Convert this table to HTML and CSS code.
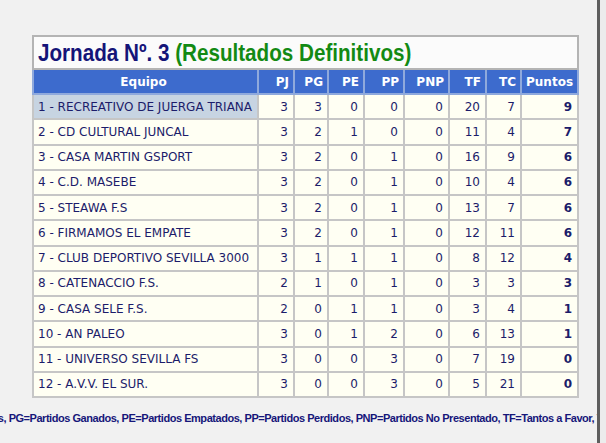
FILE: index.html
```html
<!DOCTYPE html>
<html lang="es">
<head>
<meta charset="utf-8">
<title>Jornada 3</title>
<link rel="stylesheet" href="styles.css">
</head>
<body>
<div class="page">
  <table class="clasif">
    <colgroup>
      <col class="c-eq"><col class="c-pj"><col class="c-pg"><col class="c-pe"><col class="c-pp"><col class="c-pnp"><col class="c-tf"><col class="c-tc"><col class="c-pts">
    </colgroup>
    <thead>
      <tr class="title-row"><th colspan="9" class="title"><span class="t-wrap"><span class="t-main">Jornada Nº. 3</span> <span class="t-sub">(Resultados Definitivos)</span></span></th></tr>
      <tr class="head">
        <th class="h-eq">Equipo</th><th>PJ</th><th>PG</th><th>PE</th><th>PP</th><th>PNP</th><th>TF</th><th>TC</th><th>Puntos</th>
      </tr>
    </thead>
    <tbody>
      <tr><td class="eq sel">1 - RECREATIVO DE JUERGA TRIANA</td><td>3</td><td>3</td><td>0</td><td>0</td><td>0</td><td>20</td><td>7</td><td class="pts">9</td></tr>
      <tr><td class="eq">2 - CD CULTURAL JUNCAL</td><td>3</td><td>2</td><td>1</td><td>0</td><td>0</td><td>11</td><td>4</td><td class="pts">7</td></tr>
      <tr><td class="eq">3 - CASA MARTIN GSPORT</td><td>3</td><td>2</td><td>0</td><td>1</td><td>0</td><td>16</td><td>9</td><td class="pts">6</td></tr>
      <tr><td class="eq">4 - C.D. MASEBE</td><td>3</td><td>2</td><td>0</td><td>1</td><td>0</td><td>10</td><td>4</td><td class="pts">6</td></tr>
      <tr><td class="eq">5 - STEAWA F.S</td><td>3</td><td>2</td><td>0</td><td>1</td><td>0</td><td>13</td><td>7</td><td class="pts">6</td></tr>
      <tr><td class="eq">6 - FIRMAMOS EL EMPATE</td><td>3</td><td>2</td><td>0</td><td>1</td><td>0</td><td>12</td><td>11</td><td class="pts">6</td></tr>
      <tr><td class="eq">7 - CLUB DEPORTIVO SEVILLA 3000</td><td>3</td><td>1</td><td>1</td><td>1</td><td>0</td><td>8</td><td>12</td><td class="pts">4</td></tr>
      <tr><td class="eq">8 - CATENACCIO F.S.</td><td>2</td><td>1</td><td>0</td><td>1</td><td>0</td><td>3</td><td>3</td><td class="pts">3</td></tr>
      <tr><td class="eq">9 - CASA SELE F.S.</td><td>2</td><td>0</td><td>1</td><td>1</td><td>0</td><td>3</td><td>4</td><td class="pts">1</td></tr>
      <tr><td class="eq">10 - AN PALEO</td><td>3</td><td>0</td><td>1</td><td>2</td><td>0</td><td>6</td><td>13</td><td class="pts">1</td></tr>
      <tr><td class="eq">11 - UNIVERSO SEVILLA FS</td><td>3</td><td>0</td><td>0</td><td>3</td><td>0</td><td>7</td><td>19</td><td class="pts">0</td></tr>
      <tr><td class="eq">12 - A.V.V. EL SUR.</td><td>3</td><td>0</td><td>0</td><td>3</td><td>0</td><td>5</td><td>21</td><td class="pts">0</td></tr>
    </tbody>
  </table>
  <p class="legend">PJ=Partidos Jugados, PG=Partidos Ganados, PE=Partidos Empatados, PP=Partidos Perdidos, PNP=Partidos No Presentado, TF=Tantos a Favor, TC=Tantos en Contra</p>
</div>
</body>
</html>
```

FILE: styles.css
```css
html, body {
  margin: 0;
  padding: 0;
  background: #ececec;
  overflow: hidden;
}

body {
  width: 606px;
  height: 443px;
}

.page {
  width: 600px;
  height: 443px;
  overflow: hidden;
  background: #f1f1f1;
  box-sizing: border-box;
  border-right: 3px solid #5e5e5e;
  padding: 35px 0 0 32px;
}

.clasif {
  border-collapse: collapse;
  table-layout: fixed;
  width: 546px;
  font-family: "DejaVu Sans", Verdana, sans-serif;
  font-size: 12px;
  color: #1c1c6a;
  border: 2px solid #b4b4b4;
}

.c-eq { width: 225px; }
.c-pj { width: 36px; }
.c-pg { width: 34px; }
.c-pe { width: 36px; }
.c-pp { width: 40px; }
.c-pnp { width: 45px; }
.c-tf { width: 37px; }
.c-tc { width: 35px; }
.c-pts { width: 57px; }

.title-row { height: 33px; }

.title {
  background: #fbfbfb;
  text-align: left;
  padding: 1px 0 0 4px;
  font-family: "Liberation Sans", Arial, sans-serif;
  font-size: 24px;
  font-weight: bold;
  white-space: nowrap;
  border: 2px solid #b4b4b4;
  overflow: hidden;
}

.t-wrap {
  display: inline-block;
  transform: scaleX(0.86);
  transform-origin: left center;
}

.t-main { color: #141478; }
.t-sub { color: #138a13; }

.head { height: 25px; }

.head th {
  background: #3d6bcd;
  color: #ffffff;
  font-weight: bold;
  font-size: 12px;
  text-align: right;
  padding: 0 4px 0 0;
  border: 2px solid #8fa9dc;
  border-top: 2px solid #b4b4b4;
  white-space: nowrap;
}

.head th.h-eq { text-align: center; }

tbody tr { height: 25.25px; }

tbody td {
  background: #fffff3;
  border: 2px solid #c6c6c6;
  text-align: right;
  padding: 0 5px 0 0;
  white-space: nowrap;
}

tbody td.eq {
  text-align: left;
  padding: 0 0 0 4px;
}

tbody td.sel { background: #c7d4e2; }

tbody td.pts { font-weight: bold; }

.legend {
  margin: 14px 0 0 -132px;
  white-space: nowrap;
  font-family: "Liberation Sans", Arial, sans-serif;
  font-size: 11px;
  font-weight: bold;
  letter-spacing: -0.46px;
  color: #16167a;
}
```
